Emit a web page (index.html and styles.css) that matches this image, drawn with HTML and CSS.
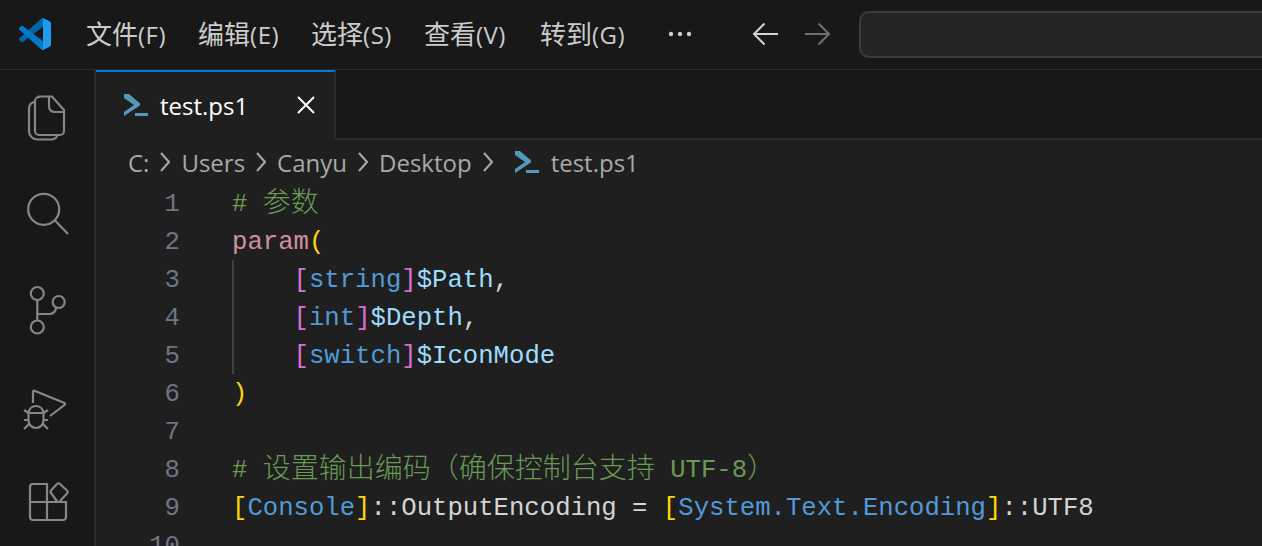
FILE: index.html
```html
<!DOCTYPE html>
<html lang="zh-CN">
<head>
<meta charset="utf-8">
<title>test.ps1</title>
<link rel="stylesheet" href="styles.css">
</head>
<body>
<div class="app">
  <header class="titlebar">
    <svg class="logo" viewBox="0 0 100 100" width="32" height="32">
      <path fill="#0065a9" d="M96.46 10.8 75.86.87a6.23 6.23 0 0 0-7.1 1.2L1.33 63.6a4.16 4.16 0 0 0 0 6.16l5.5 5a4.16 4.16 0 0 0 5.32.24L93.4 13.36c2.72-2.07 6.6-.13 6.6 3.3v-.24a6.25 6.25 0 0 0-3.54-5.62z"/>
      <path fill="#007acc" d="M96.46 89.2 75.86 99.13a6.23 6.23 0 0 1-7.1-1.2L1.33 36.4a4.16 4.16 0 0 1 0-6.16l5.5-5a4.16 4.16 0 0 1 5.32-.24L93.4 86.64c2.72 2.07 6.6.13 6.6-3.3v.24a6.25 6.25 0 0 1-3.54 5.62z"/>
      <path fill="#1f9cf0" d="M75.86 99.13a6.23 6.23 0 0 1-7.1-1.2c2.3 2.3 6.24.67 6.24-2.6V4.67c0-3.27-3.94-4.9-6.24-2.6a6.23 6.23 0 0 1 7.1-1.2l20.6 9.9A6.25 6.25 0 0 1 100 16.4v67.2a6.25 6.25 0 0 1-3.54 5.63z"/>
    </svg>
    <nav class="menu">
      <span class="menu-item"><span class="menu-cjk">文件</span>(F)</span>
      <span class="menu-item"><span class="menu-cjk">编辑</span>(E)</span>
      <span class="menu-item"><span class="menu-cjk">选择</span>(S)</span>
      <span class="menu-item"><span class="menu-cjk">查看</span>(V)</span>
      <span class="menu-item menu-item-last"><span class="menu-cjk">转到</span>(G)</span>
      <svg class="more" viewBox="0 0 24 6" width="24" height="6"><g fill="#cccccc"><circle cx="3" cy="3" r="2.2"/><circle cx="12" cy="3" r="2.2"/><circle cx="21" cy="3" r="2.2"/></g></svg>
    </nav>
    <div class="nav-arrows">
      <svg viewBox="0 0 26 24" width="26" height="24" fill="none" stroke="#d4d4d4" stroke-width="2"><path d="M26 12H2M12.500 1.500 2 12l10.500 10.500"/></svg>
      <svg viewBox="0 0 26 24" width="26" height="24" fill="none" stroke="#6f6f6f" stroke-width="2"><path d="M0 12h24M13.500 1.500 24 12 13.500 22.500"/></svg>
    </div>
    <div class="searchbox"></div>
  </header>
  <div class="workbench">
    <aside class="activity">
      <div class="act-cell"><svg viewBox="0 0 48 48" width="48" height="48" class="act-icon"><path d="M15 2.500h13l12 13.500v21a4 4 0 0 1-4 4H15a4 4 0 0 1-4-4v-30a4 4 0 0 1 4-4z"/><path d="M25 2.500v10a5.500 5.500 0 0 0 5.500 5.500H40"/><path d="M11 7.500c-3.500 1-6 3.500-6 7.500v22a8.500 8.500 0 0 0 8.500 8.500H27c3 0 5.500-1.500 6.500-4.500"/></svg></div>
      <div class="act-cell"><svg viewBox="0 0 48 48" width="48" height="48" class="act-icon"><circle cx="19.700" cy="19.300" r="15.500"/><path d="M31 30.500 44 44"/></svg></div>
      <div class="act-cell"><svg viewBox="0 0 48 48" width="48" height="48" class="act-icon"><circle cx="13.300" cy="7.500" r="6.500"/><circle cx="13.300" cy="41" r="6.500"/><circle cx="34.700" cy="16" r="6"/><path d="M13.300 14v20.500M13.300 28H26a7 7 0 0 0 6-6"/></svg></div>
      <div class="act-cell"><svg viewBox="0 0 48 48" width="48" height="48" class="act-icon"><path d="M9 21V9.500a1 1 0 0 1 1.500-.800L40.500 21a1 1 0 0 1 .1 1.800L26 34"/><path d="M4.500 31C5 27 8 24 12 24s7 3 7.500 7v7c0 5-3.500 8-7.500 8s-7.500-3-7.500-8z"/><path d="M4.500 31h15M0 28l4.500 3M24 28l-4.500 3M0 38h4.500M24 38h-4.500M0 47l5-5M24 47l-5-5"/></svg></div>
      <div class="act-cell"><svg viewBox="0 0 48 48" width="48" height="48" class="act-icon"><path d="M9 6h14v18h19v15a3 3 0 0 1-3 3H9a3 3 0 0 1-3-3V9a3 3 0 0 1 3-3z"/><path d="M6 24h17M23 24v18"/><path d="M26 13.500 33 6a2 2 0 0 1 3 0l7 6.500a2 2 0 0 1 0 3L36 23"/><path d="M26 13.500 33.500 24"/></svg></div>
    </aside>
    <main class="editor-group">
      <div class="tabbar">
        <div class="tab">
          <svg class="ps-icon" viewBox="0 0 24 24" width="24" height="24"><path fill="#519aba" d="M0 1h5l11 9.500v2L0 23v-4l10-7L0 5zM11 20h13v3H11z"/></svg>
          <span class="tab-label">test.ps1</span>
          <svg class="tab-close" viewBox="0 0 18 18" width="18" height="18" fill="none" stroke="#ffffff" stroke-width="2"><path d="M1 1l16 16M17 1 1 17"/></svg>
        </div>
      </div>
      <div class="breadcrumbs">
        <span>C:</span>
        <svg class="crumb-sep" viewBox="0 0 10 20" width="10" height="20"><path d="M1 1l8 9-8 9"/></svg>
        <span>Users</span>
        <svg class="crumb-sep" viewBox="0 0 10 20" width="10" height="20"><path d="M1 1l8 9-8 9"/></svg>
        <span>Canyu</span>
        <svg class="crumb-sep" viewBox="0 0 10 20" width="10" height="20"><path d="M1 1l8 9-8 9"/></svg>
        <span>Desktop</span>
        <svg class="crumb-sep" viewBox="0 0 10 20" width="10" height="20"><path d="M1 1l8 9-8 9"/></svg>
        <svg class="ps-icon crumb-icon" viewBox="0 0 24 24" width="24" height="24"><path fill="#519aba" d="M0 1h5l11 9.500v2L0 23v-4l10-7L0 5zM11 20h13v3H11z"/></svg>
        <span>test.ps1</span>
      </div>
      <div class="code">
        <div class="line"><span class="ln">1</span><span class="src"><span class="c"># <span class="cjk">参数</span></span></span></div>
        <div class="line"><span class="ln">2</span><span class="src"><span class="kw">param</span><span class="y">(</span></span></div>
        <div class="line guide"><span class="ln">3</span><span class="src">    <span class="p">[</span><span class="t">string</span><span class="p">]</span><span class="v">$Path</span>,</span></div>
        <div class="line guide"><span class="ln">4</span><span class="src">    <span class="p">[</span><span class="t">int</span><span class="p">]</span><span class="v">$Depth</span>,</span></div>
        <div class="line guide"><span class="ln">5</span><span class="src">    <span class="p">[</span><span class="t">switch</span><span class="p">]</span><span class="v">$IconMode</span></span></div>
        <div class="line"><span class="ln">6</span><span class="src"><span class="y">)</span></span></div>
        <div class="line"><span class="ln">7</span><span class="src"></span></div>
        <div class="line"><span class="ln">8</span><span class="src"><span class="c"># <span class="cjk">设置输出编码（确保控制台支持</span> UTF-8<span class="cjk">）</span></span></span></div>
        <div class="line"><span class="ln">9</span><span class="src"><span class="y">[</span><span class="t">Console</span><span class="y">]</span>::OutputEncoding = <span class="y">[</span><span class="t">System.Text.Encoding</span><span class="y">]</span>::UTF8</span></div>
        <div class="line"><span class="ln">10</span><span class="src"></span></div>
      </div>
    </main>
  </div>
</div>
</body>
</html>
```
FILE: styles.css
```css
* { box-sizing: border-box; }
html, body { margin: 0; padding: 0; height: 100%; overflow: hidden; background: #181818; }
.app { width: 1262px; height: 546px; display: flex; flex-direction: column; overflow: hidden; font-family: "Open Sans", "Noto Sans CJK SC", sans-serif; }

.titlebar { flex: none; height: 70px; display: flex; align-items: center; background: #181818; border-bottom: 1px solid #2b2b2b; color: #cccccc; padding: 0 0 1px 19px; overflow: hidden; }
.logo { flex: none; }
.menu { display: flex; align-items: center; margin-left: 19px; font-size: 24px; letter-spacing: 0.5px; }
.menu-item { padding: 0 16px; white-space: nowrap; line-height: 34px; }
.menu-item-last { margin-left: 2px; }
.menu-cjk { font-size: 26px; letter-spacing: 0; }
.more { margin-left: 27px; }
.nav-arrows { display: flex; gap: 27px; margin-left: 60px; }
.searchbox { flex: none; width: 500px; height: 47px; margin-left: 28px; background: #242424; border: 2px solid #3c3c3c; border-radius: 10px; }

.workbench { flex: 1; display: flex; min-height: 0; }
.activity { flex: none; width: 96px; display: flex; flex-direction: column; background: #181818; border-right: 2px solid #2b2b2b; }
.act-cell { flex: none; height: 96px; display: flex; align-items: center; padding-left: 24px; }
.act-icon { fill: none; stroke: #868686; stroke-width: 2.200; overflow: visible; }

.editor-group { flex: 1; min-width: 0; display: flex; flex-direction: column; background: #1f1f1f; }
.tabbar { flex: none; height: 70px; display: flex; align-items: flex-start; background: #181818; border-bottom: 2px solid #2b2b2b; }
.tab { flex: none; width: 240px; height: 70px; display: flex; align-items: center; padding: 0 19px 2px 28px; background: #1f1f1f; border-top: 2px solid #0078d4; border-right: 2px solid #2b2b2b; color: #ffffff; font-size: 24px; }
.ps-icon { flex: none; }
.tab-label { margin-left: 12px; flex: 1; }
.tab-close { flex: none; }

.breadcrumbs { flex: none; height: 44px; display: flex; align-items: center; gap: 11px; padding-left: 32px; color: #a9a9a9; font-size: 24px; }
.crumb-sep { fill: none; stroke: #a9a9a9; stroke-width: 2; flex: none; }
.crumb-icon { margin: 0 1px 0 11px; }

.code { flex: 1; min-height: 0; overflow: hidden; padding-top: 2px; font-family: "Liberation Mono", "Noto Sans CJK SC", monospace; font-size: 25.65px; color: #d4d4d4; }
.line { height: 38px; line-height: 38px; display: flex; white-space: pre; position: relative; }
.ln { flex: none; width: 84px; text-align: right; color: #6e7681; }
.src { margin-left: 52px; }
.guide::before { content: ""; position: absolute; left: 136px; top: -2px; bottom: 2px; width: 2px; background: #404040; }
.c { color: #6a9955; }
.cjk { font-size: 28px; font-weight: 300; vertical-align: -1px; }
.kw { color: #d38fa0; }
.y { color: #ffd700; }
.p { color: #da70d6; }
.t { color: #519ad8; }
.v { color: #9cdcfe; }
```
